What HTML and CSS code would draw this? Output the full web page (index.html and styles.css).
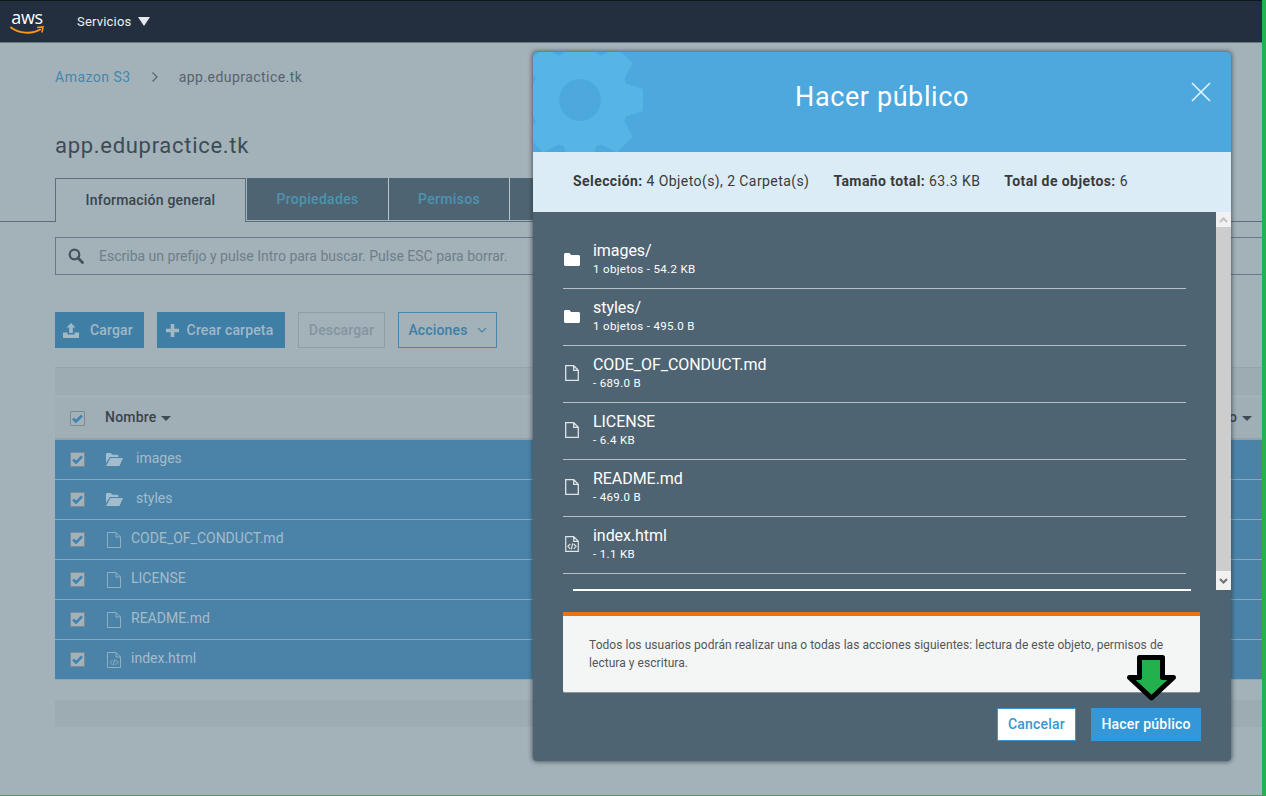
FILE: index.html
```html
<!DOCTYPE html>
<html lang="es">
<head>
    <meta charset="UTF-8">
    <meta name="viewport" content="width=device-width, initial-scale=1.0">
    <title>Hacer público - Amazon S3</title>
    <link rel="stylesheet" href="styles.css">
</head>
<body>
    <div class="page">
        <nav class="navbar">
            <div class="aws-logo">
                <span class="aws-word">aws</span>
                <svg class="aws-smile" width="34" height="10" viewBox="0 0 34 10">
                    <path d="M1 1.5C9 7.5 22 8.5 30 3.5" fill="none" stroke="#f7981d" stroke-width="2" stroke-linecap="round"/>
                    <path d="M27 1.5L33 1 32 6.5" fill="none" stroke="#f7981d" stroke-width="1.6"/>
                </svg>
            </div>
            <span class="nav-link">Servicios</span>
            <span class="nav-caret"></span>
        </nav>

        <main class="content">
            <div class="breadcrumb">
                <a class="crumb-link">Amazon S3</a>
                <svg class="crumb-sep" width="8" height="12" viewBox="0 0 8 12"><path d="M1.5 1.5L6 6 1.5 10.5" fill="none" stroke="#54646f" stroke-width="1.2"/></svg>
                <span class="crumb-current">app.edupractice.tk</span>
            </div>

            <h1 class="bucket-title">app.edupractice.tk</h1>

            <div class="tabs">
                <div class="tab active">Información general</div>
                <div class="tab tab-props">Propiedades</div>
                <div class="tab tab-perms">Permisos</div>
                <div class="tab tab-more">Administración</div>
            </div>

            <div class="search-box">
                <svg class="search-icon" width="16" height="16" viewBox="0 0 16 16"><circle cx="6.5" cy="6.5" r="4.8" fill="none" stroke="#44545f" stroke-width="2.2"/><path d="M10 10l4.5 4.5" stroke="#44545f" stroke-width="2.8" stroke-linecap="round"/></svg>
                <span class="search-text">Escriba un prefijo y pulse Intro para buscar. Pulse ESC para borrar.</span>
            </div>

            <div class="toolbar">
                <button class="btn btn-primary btn-upload">
                    <svg width="16" height="15" viewBox="0 0 16 15"><path d="M8 0l4.5 4.5H9.8V10H6.2V4.5H3.5zM0 9.5h4.5v2h7v-2H16V15H0z" fill="#a3b8c5"/></svg>
                    Cargar
                </button>
                <button class="btn btn-primary btn-folder">
                    <svg width="13" height="13" viewBox="0 0 13 13"><path d="M4.7 0h3.6v4.7H13v3.6H8.300V13H4.700V8.300H0V4.700h4.700z" fill="#a3b8c5"/></svg>
                    Crear carpeta
                </button>
                <button class="btn btn-disabled">Descargar</button>
                <button class="btn btn-outline">
                    Acciones
                    <svg width="10" height="6" viewBox="0 0 10 6"><path d="M1 1l4 4 4-4" fill="none" stroke="#4a86ab" stroke-width="1.2"/></svg>
                </button>
            </div>

            <div class="table-band"></div>

            <div class="table-header">
                <span class="check check-head"><svg width="11" height="9" viewBox="0 0 11 9"><path d="M1 4.500l3 3L10 1.500" fill="none" stroke="#3f85b3" stroke-width="2.6"/></svg></span>
                <span class="head-name">Nombre</span>
                <span class="sort-caret"></span>
                <span class="head-end">Tamaño</span>
                <span class="sort-caret"></span>
            </div>

            <div class="table-row">
                <span class="check"><svg width="11" height="9" viewBox="0 0 11 9"><path d="M1 4.500l3 3L10 1.500" fill="none" stroke="#3f85b3" stroke-width="2.6"/></svg></span>
                <svg class="row-folder" width="17" height="13" viewBox="0 0 17 13"><path d="M0 1.200C0 .5.500 0 1.200 0h3.600l1.400 1.700h5.200c.7 0 1.100.5 1.100 1.100V4H4L0 10z" fill="#a3bccb"/><path d="M4.500 5H17l-3.500 8H0z" fill="#a3bccb"/></svg>
                <span class="row-name">images</span>
            </div>
            <div class="table-row">
                <span class="check"><svg width="11" height="9" viewBox="0 0 11 9"><path d="M1 4.500l3 3L10 1.500" fill="none" stroke="#3f85b3" stroke-width="2.6"/></svg></span>
                <svg class="row-folder" width="17" height="13" viewBox="0 0 17 13"><path d="M0 1.200C0 .5.500 0 1.200 0h3.600l1.400 1.700h5.200c.7 0 1.100.5 1.100 1.100V4H4L0 10z" fill="#a3bccb"/><path d="M4.500 5H17l-3.500 8H0z" fill="#a3bccb"/></svg>
                <span class="row-name">styles</span>
            </div>
            <div class="table-row">
                <span class="check"><svg width="11" height="9" viewBox="0 0 11 9"><path d="M1 4.500l3 3L10 1.500" fill="none" stroke="#3f85b3" stroke-width="2.6"/></svg></span>
                <svg class="row-file" width="14" height="16" viewBox="0 0 14 16"><path d="M.5.500h8.500l4.500 4.500v10.500H.5zM9 .5V5h4.500" fill="none" stroke="#8fafc3"/></svg>
                <span class="row-name">CODE_OF_CONDUCT.md</span>
            </div>
            <div class="table-row">
                <span class="check"><svg width="11" height="9" viewBox="0 0 11 9"><path d="M1 4.500l3 3L10 1.500" fill="none" stroke="#3f85b3" stroke-width="2.6"/></svg></span>
                <svg class="row-file" width="14" height="16" viewBox="0 0 14 16"><path d="M.5.500h8.500l4.500 4.500v10.500H.5zM9 .5V5h4.500" fill="none" stroke="#8fafc3"/></svg>
                <span class="row-name">LICENSE</span>
            </div>
            <div class="table-row">
                <span class="check"><svg width="11" height="9" viewBox="0 0 11 9"><path d="M1 4.500l3 3L10 1.500" fill="none" stroke="#3f85b3" stroke-width="2.6"/></svg></span>
                <svg class="row-file" width="14" height="16" viewBox="0 0 14 16"><path d="M.5.500h8.500l4.500 4.500v10.500H.5zM9 .5V5h4.500" fill="none" stroke="#8fafc3"/></svg>
                <span class="row-name">README.md</span>
            </div>
            <div class="table-row">
                <span class="check"><svg width="11" height="9" viewBox="0 0 11 9"><path d="M1 4.500l3 3L10 1.500" fill="none" stroke="#3f85b3" stroke-width="2.6"/></svg></span>
                <svg class="row-file" width="14" height="16" viewBox="0 0 14 16"><path d="M.5.500h8.500l4.500 4.500v10.500H.5zM9 .5V5h4.500M5.500 8L3 10.500 5.500 13M8.500 8L11 10.500 8.500 13M7.800 7.500l-1.600 6" fill="none" stroke="#8fafc3"/></svg>
                <span class="row-name">index.html</span>
            </div>

            <div class="table-footer"></div>
        </main>

        <section class="modal">
            <header class="modal-header">
                <svg class="modal-gear" width="130" height="130" viewBox="-65 -65 130 130">
                    <defs><polygon id="gear-tooth" points="44,-17 63,-11 63,11 44,17"/></defs>
                    <g fill="#57b5e6">
                        <circle r="49"/>
                        <use href="#gear-tooth"/>
                        <use href="#gear-tooth" transform="rotate(45)"/>
                        <use href="#gear-tooth" transform="rotate(90)"/>
                        <use href="#gear-tooth" transform="rotate(135)"/>
                        <use href="#gear-tooth" transform="rotate(180)"/>
                        <use href="#gear-tooth" transform="rotate(225)"/>
                        <use href="#gear-tooth" transform="rotate(270)"/>
                        <use href="#gear-tooth" transform="rotate(315)"/>
                    </g>
                    <circle r="21" fill="#4da8dd"/>
                </svg>
                <h2 class="modal-title">Hacer público</h2>
                <svg class="modal-close" width="20" height="20" viewBox="0 0 20 20"><path d="M1 1l18 18M19 1L1 19" stroke="#e8f3fa" stroke-width="1.600"/></svg>
            </header>

            <div class="modal-summary">
                <span><b>Selección:</b> 4 Objeto(s), 2 Carpeta(s)</span>
                <span><b>Tamaño total:</b> 63.3 KB</span>
                <span><b>Total de objetos:</b> 6</span>
            </div>

            <div class="modal-body">
                <div class="list-area">
                    <ul class="object-list">
                        <li class="object-item">
                            <svg class="object-icon" width="16" height="13" viewBox="0 0 16 13"><path d="M1.500 0h4l1.500 2h7.500c.8 0 1.500.7 1.500 1.500v8c0 .8-.7 1.500-1.500 1.500h-13C.7 13 0 12.300 0 11.500v-10C0 .7.700 0 1.500 0z" fill="#fff"/></svg>
                            <div><div class="object-name">images/</div><div class="object-meta">1 objetos - 54.2 KB</div></div>
                        </li>
                        <li class="object-item">
                            <svg class="object-icon" width="16" height="13" viewBox="0 0 16 13"><path d="M1.500 0h4l1.500 2h7.500c.8 0 1.500.7 1.500 1.500v8c0 .8-.7 1.500-1.500 1.500h-13C.7 13 0 12.300 0 11.500v-10C0 .7.700 0 1.500 0z" fill="#fff"/></svg>
                            <div><div class="object-name">styles/</div><div class="object-meta">1 objetos - 495.0 B</div></div>
                        </li>
                        <li class="object-item">
                            <svg class="object-icon icon-file" width="14" height="16" viewBox="0 0 14 16"><path d="M.7.700h8l4.600 4.600v10H.7zM8.700.7v4.600h4.600" fill="none" stroke="#dfe4e7" stroke-width="1.300"/></svg>
                            <div><div class="object-name">CODE_OF_CONDUCT.md</div><div class="object-meta">- 689.0 B</div></div>
                        </li>
                        <li class="object-item">
                            <svg class="object-icon icon-file" width="14" height="16" viewBox="0 0 14 16"><path d="M.7.700h8l4.600 4.600v10H.7zM8.700.7v4.600h4.600" fill="none" stroke="#dfe4e7" stroke-width="1.300"/></svg>
                            <div><div class="object-name">LICENSE</div><div class="object-meta">- 6.4 KB</div></div>
                        </li>
                        <li class="object-item">
                            <svg class="object-icon icon-file" width="14" height="16" viewBox="0 0 14 16"><path d="M.7.700h8l4.600 4.600v10H.7zM8.700.7v4.600h4.600" fill="none" stroke="#dfe4e7" stroke-width="1.300"/></svg>
                            <div><div class="object-name">README.md</div><div class="object-meta">- 469.0 B</div></div>
                        </li>
                        <li class="object-item">
                            <svg class="object-icon icon-file" width="14" height="16" viewBox="0 0 14 16"><path d="M.7.700h8l4.600 4.600v10H.7zM8.700.7v4.600h4.600M5.300 7.800L2.900 10.300 5.300 12.800M8.700 7.800l2.400 2.500-2.400 2.500M7.700 7.300l-1.400 6" fill="none" stroke="#dfe4e7" stroke-width="1.200"/></svg>
                            <div><div class="object-name">index.html</div><div class="object-meta">- 1.1 KB</div></div>
                        </li>
                    </ul>
                    <div class="scrollbar">
                        <div class="scroll-btn scroll-up"><svg width="9" height="6" viewBox="0 0 9 6"><path d="M1 5l3.500-3.500L8 5" fill="none" stroke="#c2c2c2" stroke-width="2"/></svg></div>
                        <div class="scroll-thumb"></div>
                        <div class="scroll-btn scroll-down"><svg width="9" height="6" viewBox="0 0 9 6"><path d="M1 1l3.500 3.500L8 1" fill="none" stroke="#6e6e6e" stroke-width="2"/></svg></div>
                    </div>
                </div>

                <div class="list-end"></div>

                <div class="notice">Todos los usuarios podrán realizar una o todas las acciones siguientes: lectura de este objeto, permisos de lectura y escritura.</div>

                <div class="modal-actions">
                    <button class="btn-cancel">Cancelar</button>
                    <button class="btn-public">Hacer público</button>
                </div>
            </div>
        </section>

        <svg class="pointer-arrow" width="49" height="46" viewBox="0 0 49 46"><path d="M12.500 2.500h23v20h11L24.500 43 2.500 22.500h10z" fill="#23b14d" stroke="#000" stroke-width="5" stroke-linejoin="round"/></svg>
    </div>
</body>
</html>
```

FILE: styles.css
```css
* {
    margin: 0;
    padding: 0;
    box-sizing: border-box;
}

body {
    font-family: Roboto, "Liberation Sans", sans-serif;
    background: #a3b1b9;
}

.page {
    position: relative;
    width: 1266px;
    height: 796px;
    overflow: hidden;
    background: #a3b1b9;
    border-right: 4px solid #25b150;
    border-bottom: 1px solid #3aa56a;
}

/* Top bar */
.navbar {
    display: flex;
    align-items: center;
    height: 43px;
    background: #232f3e;
    border-top: 1px solid #10161e;
    border-bottom: 1px solid #6a7883;
    padding-left: 10px;
}

.aws-logo {
    position: relative;
    width: 34px;
    height: 30px;
    margin-right: 33px;
}

.aws-word {
    display: block;
    font-family: "Open Sans", sans-serif;
    font-size: 18px;
    font-weight: 400;
    line-height: 20px;
    color: #fff;
    letter-spacing: -0.4px;
    text-align: center;
}

.aws-smile {
    position: absolute;
    left: 0;
    top: 19px;
}

.nav-link {
    font-size: 13px;
    letter-spacing: 0.2px;
    color: #eceff1;
    margin-right: 7px;
}

.nav-caret {
    width: 0;
    height: 0;
    border-left: 6px solid transparent;
    border-right: 6px solid transparent;
    border-top: 9px solid #e6e9eb;
}

/* Page behind the dialog */
.content {
    padding-left: 55px;
}

.breadcrumb {
    display: flex;
    align-items: center;
    height: 20px;
    margin-top: 24px;
    font-size: 14px;
    letter-spacing: 0.5px;
}

.crumb-link {
    color: #4488ae;
}

.crumb-sep {
    margin: 0 20px 0 20px;
}

.crumb-current {
    color: #54646f;
    letter-spacing: 0.45px;
}

.bucket-title {
    margin-top: 44px;
    font-size: 22px;
    font-weight: 400;
    line-height: 30px;
    color: #3d4b55;
    letter-spacing: 0.7px;
}

.tabs {
    display: flex;
    height: 44px;
    margin: 17px 0 0 -55px;
    padding-left: 55px;
    border-bottom: 1px solid #5d6f7b;
}

.tab {
    height: 42px;
    background: #4f6472;
    color: #4c93b0;
    font-size: 14px;
    font-weight: 500;
    letter-spacing: 0.3px;
    line-height: 42px;
    text-align: center;
    border-right: 1px solid #b9c4cb;
}

.tab.active {
    width: 191px;
    height: 44px;
    margin-right: 1px;
    background: #a3b1b9;
    color: #37454f;
    border: 1px solid #5d6f7b;
    border-bottom: 0;
    letter-spacing: 0.2px;
}

.tab-props {
    width: 142px;
}

.tab-perms {
    width: 121px;
}

.tab-more {
    width: 160px;
}

.search-box {
    display: flex;
    align-items: center;
    height: 38px;
    margin-top: 15px;
    border: 1px solid #66788a;
    border-right: 0;
    padding-left: 12px;
}

.search-text {
    margin-left: 15px;
    font-size: 14px;
    color: #6d7f8a;
}

.toolbar {
    display: flex;
    gap: 13px;
    margin-top: 37px;
}

.btn {
    display: flex;
    align-items: center;
    justify-content: center;
    height: 36px;
    font-family: inherit;
    font-size: 14px;
    font-weight: 500;
    letter-spacing: 0.15px;
    border: 1px solid transparent;
}

.btn-primary {
    background: #3f7fa6;
    color: #a3b8c5;
    padding-right: 3px;
}

.btn-upload {
    width: 89px;
    gap: 11px;
}

.btn-folder {
    width: 128px;
    gap: 8px;
}

.btn-disabled {
    width: 87px;
    background: transparent;
    color: #8495a0;
    border-color: #8e9da6;
}

.btn-outline {
    width: 99px;
    gap: 9px;
    background: transparent;
    color: #3f7fa6;
    border-color: #4a86ab;
}

.table-band {
    height: 28px;
    margin-top: 19px;
    background: #9dabb3;
    border-top: 1px solid #95a3ab;
}

.table-header {
    display: flex;
    align-items: center;
    height: 42px;
    margin-top: 3px;
    padding: 0 10px 0 15px;
    background: #a0aeb6;
    border-bottom: 2px solid #93a1a9;
}

.head-name {
    margin: 0 5px 2px 20px;
    font-size: 14px;
    font-weight: 500;
    letter-spacing: 0.2px;
    color: #37454f;
}

.head-end {
    margin: 0 5px 2px auto;
    font-size: 14px;
    font-weight: 500;
    color: #37454f;
}

.sort-caret {
    width: 0;
    height: 0;
    border-left: 5px solid transparent;
    border-right: 5px solid transparent;
    border-top: 5px solid #3d4b55;
}

.check {
    display: flex;
    align-items: center;
    justify-content: center;
    flex: none;
    width: 15px;
    height: 15px;
    background: #a3b1b9;
    border: 1px solid #7d8a93;
    border-radius: 1px;
}

.table-row {
    display: flex;
    align-items: center;
    height: 40px;
    padding-left: 15px;
    background: #4b83a8;
    border-bottom: 1px solid #86a7bd;
    font-size: 14px;
    color: #a3bccb;
}

.table-row:last-of-type {
    border-bottom: 0;
}

.row-name {
    margin-bottom: 4px;
}

.row-folder {
    margin: 0 13px 0 21px;
}

.row-file {
    margin: 0 10px 0 22px;
}

.table-footer {
    height: 27px;
    margin-top: 20px;
    background: #9dabb3;
}

/* Dialog */
.modal {
    position: absolute;
    left: 533px;
    top: 52px;
    width: 698px;
    height: 709px;
    display: flex;
    flex-direction: column;
    border-radius: 4px;
    overflow: hidden;
    background: #4f6472;
    box-shadow: 0 0 4px 1px rgba(40, 50, 58, 0.65);
}

.modal-header {
    position: relative;
    height: 100px;
    flex: none;
    overflow: hidden;
    background: #4da8dd;
    color: #fff;
}

.modal-gear {
    position: absolute;
    left: -18px;
    top: -17px;
}

.modal-title {
    position: relative;
    margin-top: 27px;
    font-size: 27px;
    font-weight: 400;
    line-height: 36px;
    letter-spacing: 0.6px;
    text-align: center;
    color: #fff;
}

.modal-close {
    position: absolute;
    right: 20px;
    top: 30px;
}

.modal-summary {
    display: flex;
    align-items: center;
    gap: 24px;
    height: 60px;
    flex: none;
    padding: 0 0 2px 40px;
    background: #dbecf7;
    font-size: 14px;
    letter-spacing: 0.42px;
    color: #3a3a3a;
}

.modal-summary b {
    font-weight: 700;
}

.modal-body {
    flex: 1;
    position: relative;
}

.list-area {
    display: flex;
    height: 378px;
    overflow: hidden;
}

.object-list {
    flex: 1;
    list-style: none;
    padding: 20px 30px 0 30px;
}

.object-item {
    display: flex;
    align-items: center;
    height: 57px;
    border-bottom: 1px solid #b8bec1;
    color: #fff;
    padding-bottom: 2px;
}

.object-icon {
    flex: none;
    margin: 0 13px 0 1px;
}

.icon-file {
    margin: 0 14px 0 2px;
}

.object-name {
    font-size: 16px;
    line-height: 20px;
    letter-spacing: -0.05px;
}

.object-meta {
    font-size: 11.5px;
    line-height: 16px;
    letter-spacing: 0.35px;
}

.scrollbar {
    display: flex;
    flex-direction: column;
    flex: none;
    width: 15px;
}

.scroll-btn {
    display: flex;
    align-items: center;
    justify-content: center;
    flex: none;
    background: #f1f1f1;
}

.scroll-up {
    height: 15px;
}

.scroll-down {
    height: 19px;
}

.scroll-thumb {
    flex: 1;
    background: #cdcdcd;
}

.list-end {
    height: 2px;
    margin: -1px 40px 0 40px;
    background: #fff;
}

.notice {
    height: 81px;
    margin: 21px 31px 0 30px;
    padding: 20px 25px 0 26px;
    background: #f4f6f6;
    border-top: 4px solid #ec7211;
    border-bottom: 1px solid #8d9599;
    border-radius: 0 0 2px 2px;
    font-size: 12px;
    line-height: 18px;
    letter-spacing: 0.05px;
    color: #555;
}

.modal-actions {
    display: flex;
    justify-content: flex-end;
    gap: 15px;
    margin-top: 15px;
    padding-right: 30px;
}

.btn-cancel,
.btn-public {
    height: 33px;
    padding-bottom: 2px;
    font-family: inherit;
    font-size: 14px;
    font-weight: 500;
    letter-spacing: 0.2px;
}

.btn-cancel {
    width: 79px;
    background: #fff;
    color: #3498d8;
    border: 1px solid #3498d8;
}

.btn-public {
    width: 110px;
    background: #3498d8;
    color: #fff;
    border: 0;
}

/* Annotation arrow drawn on the screenshot */
.pointer-arrow {
    position: absolute;
    left: 1127px;
    top: 655px;
}
```
